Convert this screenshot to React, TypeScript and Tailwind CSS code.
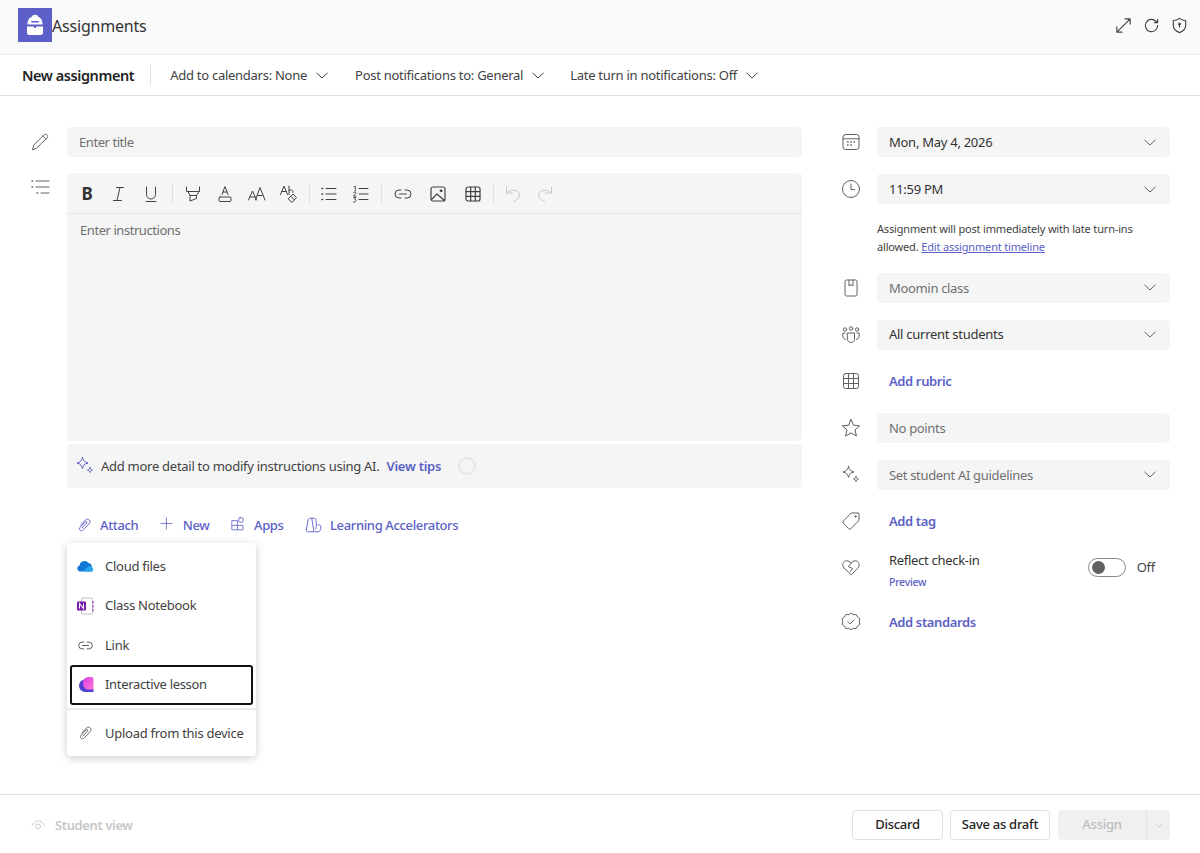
import type { ReactNode } from "react";

const FONT = "[font-family:'Noto_Sans','Open_Sans',sans-serif]";

function Ico({ size = 20, className = "", children }: { size?: number; className?: string; children: ReactNode }) {
  return (
    <svg
      width={size}
      height={size}
      viewBox="0 0 20 20"
      fill="none"
      stroke="currentColor"
      strokeWidth={1}
      strokeLinecap="round"
      strokeLinejoin="round"
      className={className}
    >
      {children}
    </svg>
  );
}

function Chevron({ className = "" }: { className?: string }) {
  return (
    <svg width="12" height="7" viewBox="0 0 12 7" fill="none" stroke="currentColor" strokeWidth={1} className={className}>
      <path d="M0.5 0.8 L6 6 L11.5 0.8" />
    </svg>
  );
}

const toolbarIcons = {
  italic: <path d="M7.5 3.5h7M11 3.5 8 16.5M4.5 16.5h8" />,
  underline: <path d="M5.5 3v7.5a4.5 4.5 0 0 0 9 0V3M5 17.5h10" />,
  highlight: <path d="M3.5 3v4.5h13V3M5 7.5l2 4h6.5l2.5-4M7 11.5V17l6.5-2.5v-3" />,
  fontColor: (
    <>
      <path d="M7 10.5 10 2.5l3 8M8 8h4" />
      <rect x="4" y="13" width="12" height="4.5" rx="1" />
    </>
  ),
  size: <path d="M1.5 16 5.5 7l4 9M3 13h5M8.5 16 13 3.5 18 16M10.500 11.500h5" />,
  clear: (
    <>
      <path d="M1.5 10.500 5 2l3.500 8.500M2.800 7.500h4.500M10 2v8.500M10 6.500c2.800-1.500 4.500 0 4 2" />
      <path d="M9.500 14.500 14 10l3.500 3.500-4 4.500h-1zM11.700 12.200l3.600 3.600" />
    </>
  ),
  bullets: (
    <>
      <path d="M7 4.500h10M7 10h10M7 15.500h10" />
      <path d="M3 4.500h.6M3 10h.6M3 15.500h.6" strokeWidth={1.6} />
    </>
  ),
  numbers: (
    <>
      <path d="M8 4.500h9M8 10h9M8 15.500h9" />
      <path d="M3 3l1.300-1v5M2.500 8.500c1-1 2.700-.5 2.500.6 0 .8-2.500 1.700-2.500 2.900H5M2.500 13.500H5L3.600 15.200c1.800 0 1.800 2.800 0 2.800H2.500" strokeWidth={0.9} />
    </>
  ),
  link: <path d="M8 6H6a4 4 0 0 0 0 8h2M12 6h2a4 4 0 0 1 0 8h-2M6.500 10h7" />,
  image: (
    <>
      <rect x="3" y="3" width="14" height="14" rx="2" strokeWidth={1.2} />
      <path d="M3.500 15.500 9 10l7.500 6.500" strokeWidth={1.2} />
      <circle cx="13" cy="6.800" r="1" fill="currentColor" />
    </>
  ),
  table: (
    <>
      <rect x="3" y="3" width="14" height="14" rx="2" strokeWidth={1.2} />
      <path d="M7.700 3v14M12.300 3v14M3 7.700h14M3 12.300h14" strokeWidth={1.2} />
    </>
  ),
  undo: <path d="M3.500 3v6h6M3.800 8.700C8 4.500 16.500 6 16.500 11c0 3-3 5-6 6.500" />,
  redo: <path d="M16.500 3v6h-6M16.200 8.700C12 4.500 3.500 6 3.500 11c0 3 3 5 6 6.500" />,
};

function ToolBtn({ w = "w-8", muted, children }: { w?: string; muted?: boolean; children: ReactNode }) {
  return (
    <span className={`flex h-[40px] ${w} items-center justify-center pt-[2px] ${muted ? "text-[#c8c8c8]" : "text-[#424242]"}`}>
      <Ico>{children}</Ico>
    </span>
  );
}

function Sep({ w }: { w: string }) {
  return (
    <span className={`flex h-[40px] ${w} items-center justify-center`}>
      <span className="h-5 w-px bg-[#e0e0e0]" />
    </span>
  );
}

function Toolbar() {
  return (
    <div className="flex h-[41px] items-center border-b border-[#e6e6e6] pl-1">
      <span className="flex h-[40px] w-8 items-center justify-center pt-[2px] text-[17px] font-bold text-[#333]">B</span>
      <ToolBtn>{toolbarIcons.italic}</ToolBtn>
      <ToolBtn>{toolbarIcons.underline}</ToolBtn>
      <Sep w="w-[10px]" />
      <ToolBtn>{toolbarIcons.highlight}</ToolBtn>
      <ToolBtn>{toolbarIcons.fontColor}</ToolBtn>
      <ToolBtn>{toolbarIcons.size}</ToolBtn>
      <ToolBtn>{toolbarIcons.clear}</ToolBtn>
      <Sep w="w-2" />
      <ToolBtn>{toolbarIcons.bullets}</ToolBtn>
      <ToolBtn>{toolbarIcons.numbers}</ToolBtn>
      <Sep w="w-2" />
      <ToolBtn w="w-[35px]">{toolbarIcons.link}</ToolBtn>
      <ToolBtn w="w-[35px]">{toolbarIcons.image}</ToolBtn>
      <ToolBtn w="w-[35px]">{toolbarIcons.table}</ToolBtn>
      <Sep w="w-[7px]" />
      <ToolBtn muted>{toolbarIcons.undo}</ToolBtn>
      <ToolBtn muted>{toolbarIcons.redo}</ToolBtn>
    </div>
  );
}

function Sparkle({ className = "" }: { className?: string }) {
  return (
    <Ico className={className}>
      <path d="M7.500 1.500c.7 3.200 2 4.600 5.500 5.500-3.500.9-4.800 2.300-5.500 5.500C6.800 9.300 5.500 7.900 2 7c3.500-.9 4.800-2.300 5.500-5.500Z" />
      <path d="M15 11.500c.3 1.500 1 2.200 2.500 2.500-1.500.3-2.200 1-2.500 2.500-.3-1.500-1-2.200-2.500-2.500 1.500-.3 2.200-1 2.500-2.500Z" />
    </Ico>
  );
}

function Paperclip({ size = 16 }: { size?: number }) {
  return (
    <Ico size={size}>
      <path d="M5.500 9.500 11 3.700c1.300-1.400 3.400-1.500 4.600-.3 1.200 1.200 1.100 3.200-.2 4.600l-7 7.300c-1.100 1.100-2.700 1.300-3.700.3-1-1-.8-2.600.3-3.700l5.800-6.100c.5-.5 1.300-.6 1.700-.2.400.4.300 1.100-.2 1.700L7 13" strokeWidth={1.1} />
    </Ico>
  );
}

function AttachMenu() {
  const item = "flex h-[39.5px] items-center gap-[11px] px-[10px] text-[13px] text-[#424242]";
  return (
    <div className="absolute left-0 top-[29px] z-10 w-[189px] rounded-[4px] bg-white pt-[3.5px] pb-[2.5px] shadow-[0_2px_10px_rgba(0,0,0,0.2)]">
      <div className={item}>
        <svg width="17" height="12" viewBox="0 0 17 12">
          <path d="M3 11.500a3 3 0 0 1-.4-5.900A5 5 0 0 1 11.500 3a3.800 3.800 0 0 1 3.300 4.500A2.200 2.200 0 0 1 14.500 11.500Z" fill="#0f78d4" />
          <path d="M6 11.500 11 6.500c2-.6 4 .2 4.500 1.500 1.200.9.600 3.500-1 3.500Z" fill="#28a8ea" />
        </svg>
        <span>Cloud files</span>
      </div>
      <div className={item}>
        <svg width="17" height="18" viewBox="0 0 17 18">
          <rect x="4.500" y="1" width="11" height="16" rx="1.500" fill="#fff" stroke="#bdbdbd" />
          <path d="M16 4v2.500M16 8v2.500M16 12v2.500" stroke="#a64fc8" strokeWidth="1.300" />
          <rect x="0" y="4.500" width="9" height="9" rx="1" fill="#7719aa" />
          <path d="M2.500 11.500v-5l4 5v-5" stroke="#fff" strokeWidth="1.100" fill="none" />
        </svg>
        <span>Class Notebook</span>
      </div>
      <div className={item}>
        <span className="w-[17px] text-[#424242]">
          <Ico size={17}>{toolbarIcons.link}</Ico>
        </span>
        <span>Link</span>
      </div>
      <div className={`${item} mx-[3px] rounded-[3px] border-2 border-[#111] !gap-[10px] !px-[6px]`}>
        <svg width="17" height="17" viewBox="0 0 17 17">
          <defs>
            <linearGradient id="lg" x1="0" y1="0" x2="1" y2="1">
              <stop offset="0" stopColor="#d63be0" />
              <stop offset="1" stopColor="#ff7ad9" />
            </linearGradient>
          </defs>
          <path d="M5.500 3.500A7 7 0 0 0 1 9.500c0 3.800 3 6.500 6.500 6.500H15.500V13H8Z" fill="#4f3fd0" />
          <path d="M5 6.500A5.500 5.500 0 0 1 10.500 1h3A2 2 0 0 1 15.500 3v10.500H10.500A5.500 5.500 0 0 1 5 8Z" fill="url(#lg)" />
        </svg>
        <span className="tracking-[-0.32px]">Interactive lesson</span>
      </div>
      <div className="mt-[3px] mb-[4.500px] h-[2px] bg-[#ececec]" />
      <div className={item}>
        <span className="w-[17px] text-[#616161]">
          <Paperclip size={17} />
        </span>
        <span className="whitespace-nowrap">Upload from this device</span>
      </div>
    </div>
  );
}

function Field({ children, chevron, muted }: { children: ReactNode; chevron?: boolean; muted?: boolean }) {
  return (
    <div className={`flex h-[30px] w-[293px] items-center justify-between rounded-[4px] bg-[#f5f5f5] pl-3 pr-[14px] text-[13px] ${muted ? "text-[#707070] tracking-[-0.33px]" : "text-[#333]"}`}>
      <span className="pt-px">{children}</span>
      {chevron && <Chevron className="text-[#616161]" />}
    </div>
  );
}

function Row({ icon, children, className = "" }: { icon: ReactNode; children: ReactNode; className?: string }) {
  return (
    <div className={`flex h-[30px] items-center ${className}`}>
      <span className="mr-[16px] flex w-[20px] justify-center text-[#616161]">{icon}</span>
      {children}
    </div>
  );
}

function AddLink({ children }: { children: ReactNode }) {
  return <span className="pl-3 text-[13px] font-semibold tracking-[-0.38px] text-[#5b5fc7]">{children}</span>;
}

function SidePanel() {
  return (
    <div className="flex w-[329px] flex-col">
      <Row icon={<Ico><rect x="2" y="2.500" width="16" height="15" rx="2.500" /><path d="M2 6.800h16" /><path d="M6.500 10h.6M9.800 10h.6M13 10h.6M6.500 13h.6M9.800 13h.6" strokeWidth={1.400} /></Ico>}>
        <Field chevron>Mon, May 4, 2026</Field>
      </Row>
      <Row className="mt-[17px]" icon={<Ico><circle cx="10" cy="10" r="8.500" /><path d="M10 5v5.500h3.500" /></Ico>}>
        <Field chevron>11:59 PM</Field>
      </Row>
      <p className="mt-[15.67px] ml-[36px] text-[11px] leading-[18.5px] tracking-[-0.17px] text-[#424242]">
        Assignment will post immediately with late turn-ins
        <br />
        allowed. <span className="text-[#5b5fc7] underline">Edit assignment timeline</span>
      </p>
      <Row className="mt-[16.33px]" icon={<Ico><path d="M4 3.500A1.500 1.500 0 0 1 5.500 2h9A1.500 1.500 0 0 1 16 3.500v13a1.500 1.500 0 0 1-1.500 1.500h-9A1.500 1.500 0 0 1 4 16.500Z" /><path d="M8 2v6l2-1.500L12 8V2" /></Ico>}>
        <Field chevron muted>Moomin class</Field>
      </Row>
      <Row className="mt-[16.67px]" icon={<Ico><circle cx="4" cy="4.500" r="1.700" /><circle cx="10" cy="3.500" r="1.700" /><circle cx="16" cy="4.500" r="1.700" /><path d="M6.500 8h7v6.500c0 4-7 4-7 0Z" /><path d="M4 8H2c-.5 2.500-.3 6 2.500 6.500M16 8h2c.5 2.500.3 6-2.500 6.500" /></Ico>}>
        <Field chevron>All current students</Field>
      </Row>
      <Row className="mt-[16.67px]" icon={<Ico><rect x="2.500" y="2.500" width="15" height="15" rx="2" /><path d="M7.500 2.500v15M12.500 2.500v15M2.500 7.500h15M2.500 12.500h15" /></Ico>}>
        <AddLink>Add rubric</AddLink>
      </Row>
      <Row className="mt-[16.67px]" icon={<Ico><path d="M10 1.500l2.500 5.700 6.200.6-4.700 4.100 1.400 6.100L10 14.900l-5.400 3.100L6 11.900 1.300 7.800l6.200-.6Z" /></Ico>}>
        <Field muted>No points</Field>
      </Row>
      <Row className="mt-[17px]" icon={<Sparkle />}>
        <Field chevron muted>Set student AI guidelines</Field>
      </Row>
      <Row className="mt-[16.33px]" icon={<Ico><path d="M10.500 2H17a1 1 0 0 1 1 1v6.500L9.800 17.700a1.500 1.500 0 0 1-2 0l-5.500-5.500a1.500 1.500 0 0 1 0-2Z" /><circle cx="14.500" cy="5.500" r=".7" /></Ico>}>
        <AddLink>Add tag</AddLink>
      </Row>
      <Row className="mt-[6px] !h-[50px]" icon={<Ico><path d="M10 17.500 3 11C.5 8.300 2 3.800 5.700 3.800c1.800 0 3.300 1 4.300 2.500 1-1.500 2.500-2.500 4.300-2.500C18 3.800 19.500 8.300 17 11Z" /><path d="M10 6.300 7.500 9.500l4 2-2 3" /></Ico>}>
        <div className="flex w-[293px] items-center">
          <div className="pl-3 pt-[6px] leading-none">
            <div className="text-[13px] leading-[18px] tracking-[-0.3px] text-[#333]">Reflect check-in</div>
            <div className="mt-[6px] text-[10.500px] font-medium leading-[14px] text-[#5b5fc7]">Preview</div>
          </div>
          <span className="ml-auto flex h-[19px] w-[38px] items-center rounded-full border border-[#8a8a8a] pl-[3px]">
            <span className="h-[13px] w-[13px] rounded-full bg-[#616161]" />
          </span>
          <span className="ml-[11px] mr-[15px] text-[13px] text-[#424242]">Off</span>
        </div>
      </Row>
      <Row className="mt-[15px]" icon={<Ico><path d="M10 1.300l2.400 1.400 2.800-.2 1.300 2.500 2.300 1.600-.5 2.900.5 2.900-2.300 1.600-1.300 2.500-2.800-.2L10 17.700l-2.400-1.400-2.800.2-1.300-2.500-2.300-1.600.5-2.900-.5-2.900 2.300-1.600 1.300-2.500 2.800.2Z" /><path d="M7 9.800l2.200 2.200 4-4.200" /></Ico>}>
        <AddLink>Add standards</AddLink>
      </Row>
    </div>
  );
}

function Action({ icon, label }: { icon: ReactNode; label: string }) {
  return (
    <span className="flex items-center gap-[7px] text-[13px] font-medium tracking-[-0.36px] text-[#5b5fc7]">
      {icon}
      <span className="pt-px">{label}</span>
    </span>
  );
}

export default function App() {
  return (
    <div className={`flex h-[853px] w-[1200px] flex-col overflow-hidden bg-white tracking-[-0.27px] ${FONT}`}>
      <header className="flex h-[55px] items-center border-b border-[#ededed] bg-[#fafafa] pb-[4px] pl-[18px] pr-[11px]">
        <span className="flex h-[34px] w-[34px] items-center justify-center bg-[#5b5fc7]">
          <svg width="18" height="22" viewBox="0 0 18 22">
            <path d="M6.500 3C6.500 .8 11.500 .8 11.500 3" stroke="#fff" strokeWidth="1.300" fill="none" />
            <path d="M1.500 10.500V9a7.500 7 0 0 1 15 0v1.500Z" fill="#fff" />
            <path d="M1 12.500h7v1.500h2v-1.500h7v6a2.500 2.500 0 0 1-2.500 2.500h-11A2.500 2.500 0 0 1 1 18.500Z" fill="#fff" />
            <rect x="5" y="7" width="8" height="1.600" rx=".8" fill="#5b5fc7" />
          </svg>
        </span>
        <h1 className="pt-[1px] text-[16px] font-normal tracking-[-0.2px] text-[#333]">Assignments</h1>
        <div className="ml-auto flex items-center gap-[9px] text-[#424242]">
          <Ico size={19}><path d="M3 17 17 3M11.500 3H17v5.500M3 11.500V17h5.500" strokeWidth={1.200} /></Ico>
          <Ico size={19}><path d="M16.500 10a6.500 6.500 0 1 1-2-4.700L16.500 7M16.500 3.500V7H13" strokeWidth={1.200} /></Ico>
          <Ico size={19}><path d="M10 2.500c2 1.500 4 2.200 6.500 2.200V10c0 3.700-2.500 6-6.500 7.500C6 16 3.500 13.700 3.500 10V4.700C6 4.700 8 4 10 2.500Z" strokeWidth={1.200} /><path d="M10 8.500v3" strokeWidth={1.200} /><circle cx="10" cy="8.500" r="1" fill="currentColor" /></Ico>
        </div>
      </header>

      <nav className="flex h-[41px] items-center border-b border-[#e0e0e0] pl-[22px] text-[13px] text-[#424242]">
        <span className="pt-px text-[14.500px] font-semibold tracking-[-0.43px] text-[#242424]">New assignment</span>
        <span className="ml-[16px] mr-[19px] h-[20px] w-px bg-[#e0e0e0]" />
        <span className="flex items-center gap-[9px] pt-[1px]"><span>Add to calendars: None</span> <Chevron /></span>
        <span className="ml-[27px] flex items-center gap-[9px] pt-[1px]"><span>Post notifications to: General</span> <Chevron /></span>
        <span className="ml-[26px] flex items-center gap-[9px] pt-[1px]"><span>Late turn in notifications: Off</span> <Chevron /></span>
      </nav>

      <main className="flex flex-1 pl-[30px] pt-[31px]">
        <div className="w-[772px]">
          <div className="flex h-[30px] items-center">
            <span className="mr-[17px] text-[#616161]">
              <Ico><path d="M2.500 17.500 3.800 13 14 2.800c.8-.8 2.200-.8 3 .1.800.8.800 2.100 0 2.900L6.800 16Z" /><path d="M12.800 4l3 3" /></Ico>
            </span>
            <div className="flex h-[30px] w-[735px] items-center rounded-[4px] bg-[#f5f5f5] px-3 pt-px text-[13px] tracking-[-0.44px] text-[#707070]">Enter title</div>
          </div>

          <div className="mt-[16px] flex items-start">
            <span className="mr-[17px] mt-[5px] text-[#616161]">
              <Ico><path d="M6 3h13M6 9h13M11 15h8" /><path d="M2 3h.6M2 9h.6M7 15h.6" strokeWidth={1.400} /></Ico>
            </span>
            <div className="w-[735px]">
              <div className="h-[268px] rounded-[4px] bg-[#f5f5f5]">
                <Toolbar />
                <div className="pl-[13px] pt-[7px] text-[13px] tracking-[-0.44px] text-[#707070]">Enter instructions</div>
              </div>
              <div className="mt-[3px] flex h-[44px] items-center rounded-[4px] bg-[#f5f5f5] pl-[8px] text-[13px] text-[#424242]">
                <span className="text-[#5b5fc7]"><Sparkle /></span>
                <span className="ml-[6px] pt-[2px]">Add more detail to modify instructions using AI.</span>
                <span className="ml-[7px] pt-[2px] font-semibold tracking-[-0.25px] text-[#5b5fc7]">View tips</span>
                <span className="ml-[17px] h-[18px] w-[18px] rounded-full border-2 border-[#e6e6e6]" />
              </div>
              <div className="relative mt-[26px] flex h-[22px] items-center gap-[21.5px] pl-[9px]">
                <Action icon={<Paperclip size={17} />} label="Attach" />
                <Action icon={<Ico size={16}><path d="M8 1v14M1 8h14" /></Ico>} label="New" />
                <Action icon={<Ico size={16}><path d="M1.500 4.500H8V16H1.500ZM1.500 10.500H15V16H8" /><rect x="9.800" y="1" width="5.400" height="5.400" rx="1" transform="rotate(10 12.500 3.700)" /></Ico>} label="Apps" />
                <Action icon={<Ico size={18}><path d="M1.500 15 3.500 4.500C3.800 3 5 2.500 6 2.500h1.500l2.500 15H3c-1 0-1.700-1-1.500-2.500Z" /><path d="M7.500 2.500h2.800c1 0 1.400.8 1.600 1.500l1 6" /><path d="M11 17.500h4c1.500 0 3-3 2.500-6-.2-1.300-1.500-2-2.800-1.500M12 14c0-1.500.5-3 1-4" /></Ico>} label="Learning Accelerators" />
                <AttachMenu />
              </div>
            </div>
          </div>
        </div>
        <div className="ml-[39px]">
          <SidePanel />
        </div>
      </main>

      <footer className="flex h-[59px] items-center border-t border-[#e0e0e0] pl-[30px] pr-[30px] pt-[2px]">
        <span className="flex items-center gap-[7px] text-[13px] font-semibold tracking-[-0.38px] text-[#c7c7c7]">
          <Ico size={18}><path d="M2 11c3.500-7.500 10.500-7.500 14 0" /><circle cx="9" cy="11.500" r="2.700" /></Ico>
          <span className="pt-px">Student view</span>
        </span>
        <div className="ml-auto flex items-center text-[13px] font-medium text-[#242424]">
          <button className="h-[30px] w-[91px] rounded-[4px] border border-[#e0e0e0]">Discard</button>
          <button className="ml-[7px] h-[30px] w-[100px] rounded-[4px] border border-[#e0e0e0]">Save as draft</button>
          <div className="ml-[8px] flex h-[30px] w-[112px] rounded-[4px] bg-[#f0f0f0] text-[#bdbdbd]">
            <span className="flex w-[89px] items-center justify-center border-r border-[#e4e4e4]">Assign</span>
            <span className="flex flex-1 items-center justify-center"><Chevron className="h-[5px] w-[8px]" /></span>
          </div>
        </div>
      </footer>
    </div>
  );
}
